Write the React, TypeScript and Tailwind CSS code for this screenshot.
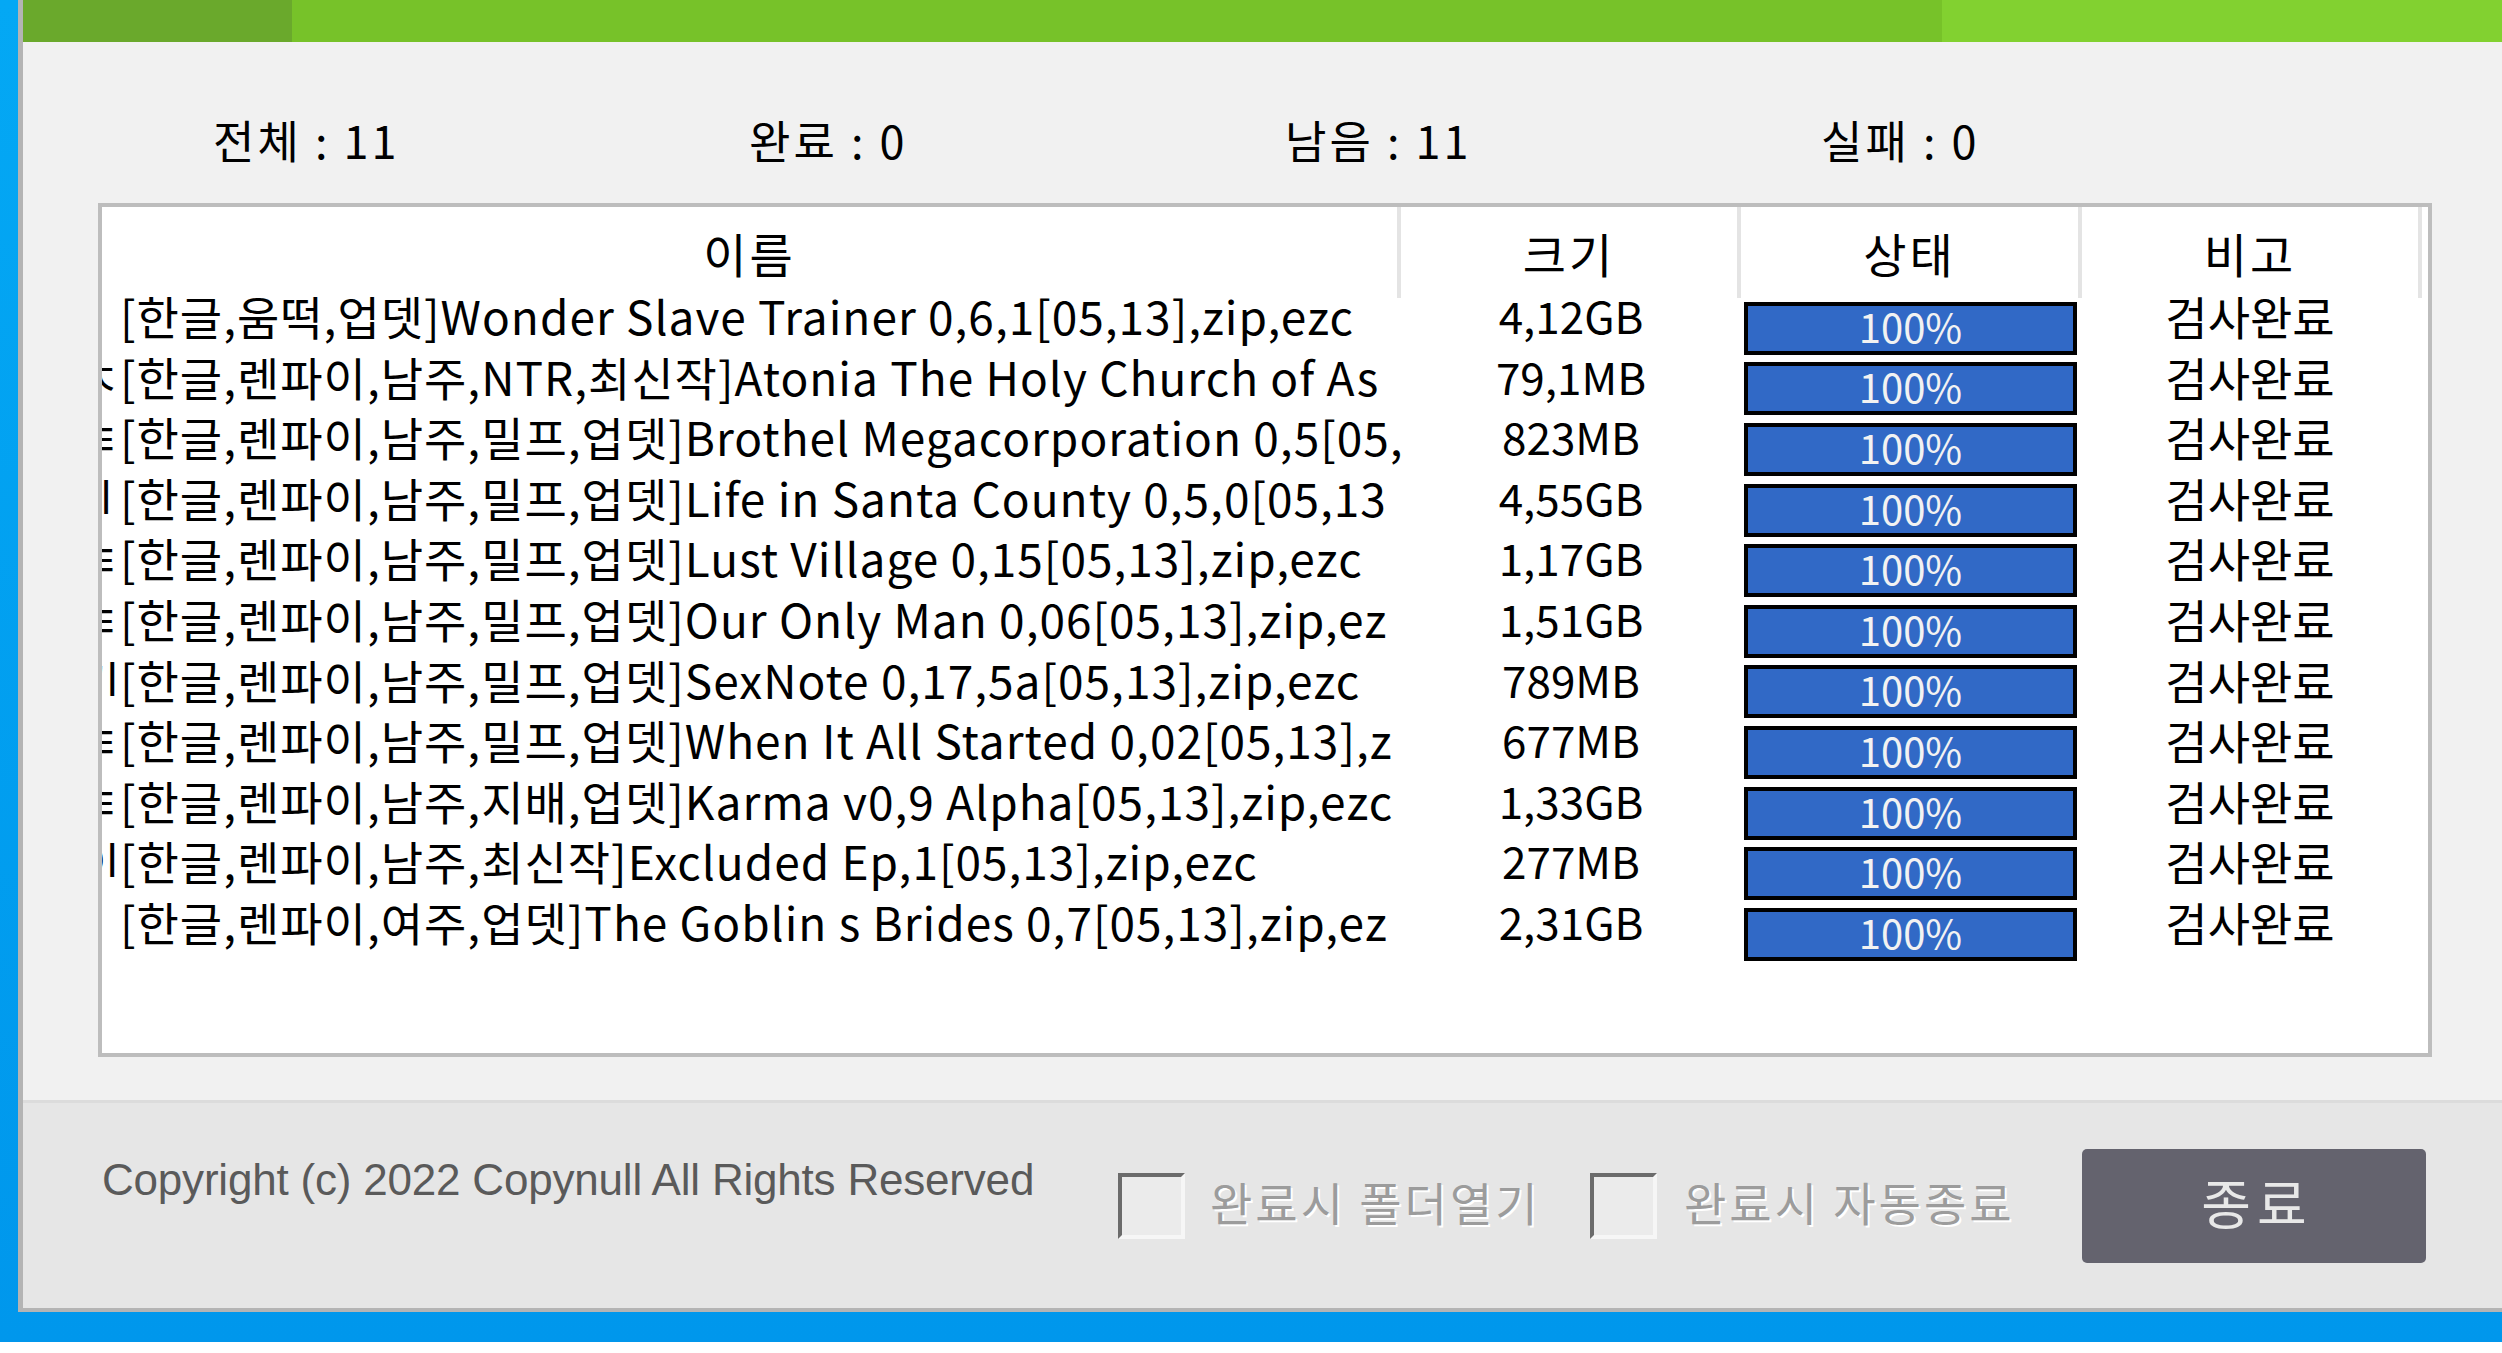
import React from 'react';

// 압축 검사 진행 창 – 상단 집계, 파일 목록, 하단 옵션/종료 버튼
const KR = "font-['Noto_Sans_CJK_KR',sans-serif]";

type Row = { pre: string; name: string; size: string };

// 이름 칸은 원본 창처럼 보이는 만큼만 표시
const rows: Row[] = [
  { pre: '', name: '[한글,움떡,업뎃]Wonder Slave Trainer 0,6,1[05,13],zip,ezc', size: '4,12GB' },
  { pre: 'ㅈ', name: '[한글,렌파이,남주,NTR,최신작]Atonia The Holy Church of As', size: '79,1MB' },
  { pre: 'ㅌ', name: '[한글,렌파이,남주,밀프,업뎃]Brothel Megacorporation 0,5[05,', size: '823MB' },
  { pre: 'ㅔ', name: '[한글,렌파이,남주,밀프,업뎃]Life in Santa County 0,5,0[05,13', size: '4,55GB' },
  { pre: 'ㅌ', name: '[한글,렌파이,남주,밀프,업뎃]Lust Village 0,15[05,13],zip,ezc', size: '1,17GB' },
  { pre: 'ㅌ', name: '[한글,렌파이,남주,밀프,업뎃]Our Only Man 0,06[05,13],zip,ez', size: '1,51GB' },
  { pre: '기', name: '[한글,렌파이,남주,밀프,업뎃]SexNote 0,17,5a[05,13],zip,ezc', size: '789MB' },
  { pre: 'ㅌ', name: '[한글,렌파이,남주,밀프,업뎃]When It All Started 0,02[05,13],z', size: '677MB' },
  { pre: 'ㅌ', name: '[한글,렌파이,남주,지배,업뎃]Karma v0,9 Alpha[05,13],zip,ezc', size: '1,33GB' },
  { pre: '이', name: '[한글,렌파이,남주,최신작]Excluded Ep,1[05,13],zip,ezc', size: '277MB' },
  { pre: '', name: '[한글,렌파이,여주,업뎃]The Goblin s Brides 0,7[05,13],zip,ez', size: '2,31GB' },
];

const stats = [
  { label: '전체', value: 11 },
  { label: '완료', value: 0 },
  { label: '남음', value: 11 },
  { label: '실패', value: 0 },
];

function Sep() {
  return <div className="w-[4px] shrink-0 self-stretch bg-[#e4e4e4]" />;
}

function Header() {
  return (
    <div className="flex h-[91px] shrink-0 text-[47px] leading-none tracking-[3px] text-black">
      <div className="flex w-[1295px] shrink-0 items-center justify-center">이름</div>
      <Sep />
      <div className="flex w-[336px] shrink-0 items-center justify-center">크기</div>
      <Sep />
      <div className="flex w-[337px] shrink-0 items-center justify-center">상태</div>
      <Sep />
      <div className="flex w-[336px] shrink-0 items-center justify-center">비고</div>
      <Sep />
    </div>
  );
}

function FileRow({ row }: { row: Row }) {
  return (
    <div className="flex h-[60.6px] shrink-0 text-[46px] leading-[34px] text-black">
      <div className="flex w-[1299px] shrink-0 items-start whitespace-nowrap">
        <span className="flex w-[18px] shrink-0 justify-end overflow-hidden">
          <span className="shrink-0">{row.pre}</span>
        </span>
        <span className="shrink-0 tracking-[1px]">{row.name}</span>
      </div>
      <div className="flex w-[340px] shrink-0 items-start justify-center text-[44px] leading-[34px]">
        <span>{row.size}</span>
      </div>
      <div className="flex w-[341px] shrink-0 items-center pl-[3px]">
        <div className="flex h-[53px] w-[333px] items-center justify-center border-[4px] border-black bg-[#3169c6] pb-[5px] text-[40px] leading-none text-[#f2f2f2]">
          100%
        </div>
      </div>
      <div className="flex w-[336px] shrink-0 items-start justify-center">
        <span>검사완료</span>
      </div>
    </div>
  );
}

function CheckOption({ label, className }: { label: string; className: string }) {
  return (
    <>
      <div className="h-[66px] w-[67px] shrink-0 border-[4px] border-t-[#6b6b6b] border-l-[#6b6b6b] border-r-[#f6f6f6] border-b-[#f6f6f6] bg-[#ebebeb]" />
      <span
        className={`${className} mb-[10px] shrink-0 text-[46px] leading-none tracking-[3px] text-[#9c9c9c] [text-shadow:2px_2px_0_#ffffff]`}
      >
        {label}
      </span>
    </>
  );
}

export default function App() {
  return (
    <div className={`${KR} flex h-[1353px] w-[2502px] flex-col overflow-hidden bg-white`}>
      <div className="flex h-[1342px] shrink-0 bg-[#02a5f2] bg-gradient-to-b from-[#04a8f4] to-[#0097ec]">
        <div className="ml-[18px] flex h-[1312px] flex-1 flex-col border-b-[4px] border-l-[5px] border-[#b4b4b4] bg-[#f1f1f1]">
          {/* progress strip */}
          <div className="flex h-[42px] shrink-0">
            <div className="w-[269px] bg-[#6aa92c]" />
            <div className="flex-1 bg-[#77c229]" />
            <div className="w-[560px] bg-[#82d130]" />
          </div>

          {/* totals */}
          <div className="mt-[75px] flex h-[45px] shrink-0 pl-[190px] text-[45px] leading-none tracking-[3px] text-black">
            {stats.map((s) => (
              <div key={s.label} className="w-[536px] shrink-0 whitespace-pre">
                {`${s.label} : ${s.value}`}
              </div>
            ))}
          </div>

          {/* file list */}
          <div className="ml-[75px] mt-[41px] flex h-[854px] w-[2334px] shrink-0 flex-col overflow-hidden border-[4px] border-[#bdbdbd] bg-white">
            <Header />
            {rows.map((r, i) => (
              <FileRow key={i} row={r} />
            ))}
          </div>

          {/* footer */}
          <div className="mt-auto flex h-[208px] shrink-0 items-center border-t-[3px] border-[#dcdcdc] bg-[#e6e6e6] pl-[79px]">
            <span className="mb-[52px] w-[1016px] shrink-0 font-['Liberation_Sans',Arial,sans-serif] text-[44px] leading-none tracking-[-0.2px] text-[#5a5a5a]">
              Copyright (c) 2022 Copynull All Rights Reserved
            </span>
            <CheckOption label="완료시 폴더열기" className="ml-[25px] w-[380px]" />
            <CheckOption label="완료시 자동종료" className="ml-[27px]" />
            <button className="ml-auto mr-[76px] flex h-[114px] w-[344px] shrink-0 items-center justify-center rounded-[5px] bg-[#64636e] pb-[8px] pl-[6px] text-[54px] leading-none tracking-[6px] text-[#e8e8e8]">
              종료
            </button>
          </div>
        </div>
      </div>
    </div>
  );
}
